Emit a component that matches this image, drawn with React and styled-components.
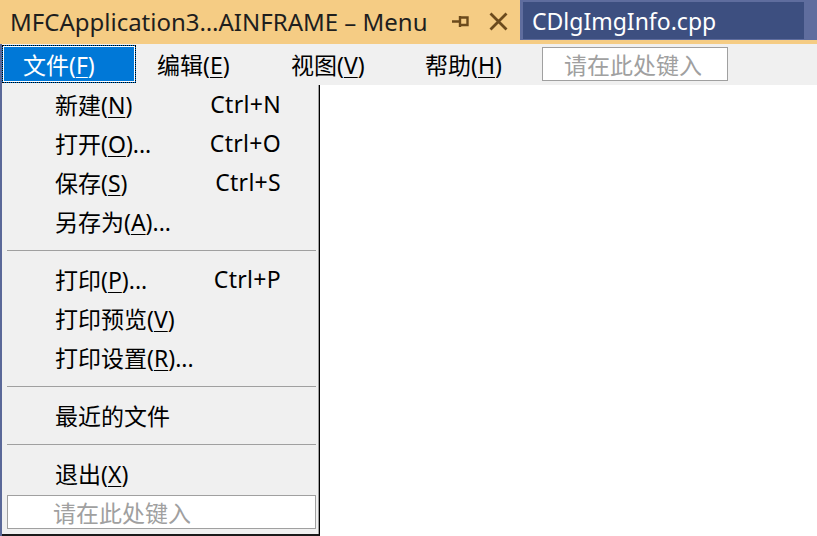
import React from "react";
import styled, { createGlobalStyle } from "styled-components";

const GlobalStyle = createGlobalStyle`
  html, body {
    margin: 0;
    padding: 0;
    background: #ffffff;
    overflow: hidden;
  }
  * {
    box-sizing: border-box;
  }
`;

const uiFont = `"Noto Sans", "Noto Sans CJK SC", sans-serif`;

const Page = styled.div`
  width: 817px;
  height: 536px;
  display: flex;
  flex-direction: column;
  font-family: ${uiFont};
  overflow: hidden;
`;

const TitleRow = styled.div`
  height: 44px;
  flex: none;
  display: flex;
  align-items: flex-start;
  background: #f5cc84;
`;

const DocTab = styled.div`
  width: 520px;
  height: 40px;
  display: flex;
  align-items: center;
  padding: 2px 0 0 10px;
  color: #1e1e1e;
  font-size: 24px;
`;

const TabTitle = styled.span`
  width: 440px;
  white-space: nowrap;
`;

const TabButton = styled.span`
  display: flex;
  align-items: center;
  justify-content: center;
  width: ${(p) => p.$w}px;
  margin-left: ${(p) => p.$gap || 0}px;
  color: #6b4a1c;
`;

const TabWell = styled.div`
  flex: 1;
  height: 40px;
  display: flex;
  padding: 2px 13px 1px 3px;
  background: #5f6d9e;
`;

const ActiveTab = styled.div`
  flex: 1;
  display: flex;
  align-items: center;
  padding: 1px 0 0 9px;
  background: #3d4f80;
  color: #ffffff;
  font-size: 23px;
`;

const Body = styled.div`
  flex: 1;
  display: flex;
`;

const LeftStrip = styled.div`
  width: 2px;
  background: #5a6898;
`;

const Main = styled.div`
  flex: 1;
  display: flex;
  flex-direction: column;
`;

const MenuBar = styled.div`
  height: 41px;
  display: flex;
  align-items: center;
  background: #f0f0f0;
  padding-bottom: 1px;
`;

const BarItem = styled.div`
  width: 134px;
  height: 38px;
  display: flex;
  align-items: center;
  padding-left: 20px;
  font-size: 23px;
  color: ${(p) => (p.$active ? "#ffffff" : "#000000")};
  background: ${(p) => (p.$active ? "#0078d7" : "transparent")};
  border: 1px dotted ${(p) => (p.$active ? "#000000" : "transparent")};
  box-shadow: ${(p) => (p.$active ? "inset 0 0 0 1px #ffffff" : "none")};
`;

const Hot = styled.u`
  text-decoration-thickness: 1px;
  text-underline-offset: 3px;
`;

const TypeHere = styled.div`
  width: ${(p) => p.$w}px;
  height: 34px;
  display: flex;
  align-items: center;
  padding-left: ${(p) => p.$pad}px;
  margin: ${(p) => p.$margin};
  background: #ffffff;
  border: 1px solid #a0a0a0;
  color: #a0a0a0;
  font-size: 23px;
`;

const Workspace = styled.div`
  flex: 1;
  display: flex;
  align-items: flex-start;
  background: #ffffff;
`;

const Dropdown = styled.div`
  width: 318px;
  height: 451px;
  display: flex;
  flex-direction: column;
  background: #f0f0f0;
  border-right: 1px solid #000000;
  border-bottom: 2px solid #1a1a1a;
  box-shadow: inset -1px 0 0 #a0a0a0;
  padding-bottom: 4px;
`;

const Row = styled.div`
  height: 39px;
  flex: none;
  display: flex;
  align-items: center;
  justify-content: space-between;
  padding: 0 38px 2px 53px;
  font-size: 23px;
  color: #000000;
`;

const Shortcut = styled.span`
  font-size: 23px;
  letter-spacing: 0.3px;
`;

const Separator = styled.div`
  height: 1px;
  flex: none;
  margin: 9px 3px 9px 5px;
  background: #a0a0a0;
`;

const PinIcon = () => (
  <svg width="17" height="13" viewBox="0 0 17 13">
    <path d="M0 6.5 H8 M8 1 V12 M8 2.5 H15.5 V10 H8" stroke="currentColor" strokeWidth="2.4" fill="none" />
  </svg>
);

const CloseIcon = () => (
  <svg width="19" height="19" viewBox="0 0 19 19">
    <path d="M1.5 1.5 L17.5 17.5 M17.5 1.5 L1.5 17.5" stroke="currentColor" strokeWidth="2.8" />
  </svg>
);

const label = (text, key, tail = "") => (
  <span>
    {text}(<Hot>{key}</Hot>){tail}
  </span>
);

const fileMenu = [
  { text: "新建", key: "N", short: "Ctrl+N" },
  { text: "打开", key: "O", tail: "...", short: "Ctrl+O" },
  { text: "保存", key: "S", short: "Ctrl+S" },
  { text: "另存为", key: "A", tail: "..." },
  "sep",
  { text: "打印", key: "P", tail: "...", short: "Ctrl+P" },
  { text: "打印预览", key: "V" },
  { text: "打印设置", key: "R", tail: "..." },
  "sep",
  { text: "最近的文件" },
  "sep",
  { text: "退出", key: "X" },
];

const bar = [
  { text: "文件", key: "F", active: true },
  { text: "编辑", key: "E" },
  { text: "视图", key: "V" },
  { text: "帮助", key: "H" },
];

export default function App() {
  return (
    <Page>
      <GlobalStyle />
      <TitleRow>
        <DocTab>
          <TabTitle>MFCApplication3…AINFRAME – Menu</TabTitle>
          <TabButton $w={20}>
            <PinIcon />
          </TabButton>
          <TabButton $w={24} $gap={16}>
            <CloseIcon />
          </TabButton>
        </DocTab>
        <TabWell>
          <ActiveTab>CDlgImgInfo.cpp</ActiveTab>
        </TabWell>
      </TitleRow>
      <Body>
        <LeftStrip />
        <Main>
          <MenuBar>
            {bar.map((b) => (
              <BarItem key={b.key} $active={b.active}>
                {label(b.text, b.key)}
              </BarItem>
            ))}
            <TypeHere $w={186} $pad={21} $margin="0 0 0 4px">
              请在此处键入
            </TypeHere>
          </MenuBar>
          <Workspace>
            <Dropdown>
              {fileMenu.map((m, i) =>
                m === "sep" ? (
                  <Separator key={i} />
                ) : (
                  <Row key={i}>
                    {m.key ? label(m.text, m.key, m.tail) : <span>{m.text}</span>}
                    {m.short && <Shortcut>{m.short}</Shortcut>}
                  </Row>
                )
              )}
              <TypeHere $w={309} $pad={45} $margin="2px 0 0 5px">
                请在此处键入
              </TypeHere>
            </Dropdown>
          </Workspace>
        </Main>
      </Body>
    </Page>
  );
}
